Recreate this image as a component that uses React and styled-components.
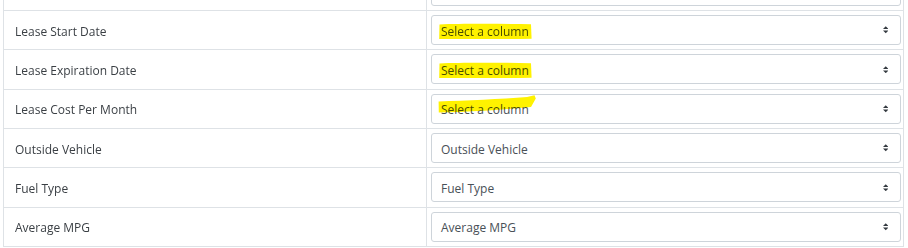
import React from 'react';
import styled, { createGlobalStyle } from 'styled-components';

const rows = [
  { label: '', value: '' },
  { label: 'Lease Start Date', value: 'Select a column', mark: 'flat' },
  { label: 'Lease Expiration Date', value: 'Select a column', mark: 'flat' },
  { label: 'Lease Cost Per Month', value: 'Select a column', mark: 'slant' },
  { label: 'Outside Vehicle', value: 'Outside Vehicle' },
  { label: 'Fuel Type', value: 'Fuel Type' },
  { label: 'Average MPG', value: 'Average MPG' },
];

// highlighter strokes someone drew over the screenshot
const marks = {
  flat: 'M8.5 9.4 C30 8.6 70 8.8 100 9.2 L100.6 23.8 C70 24.3 30 24.1 8.2 23.9 Z',
  slant: 'M7.6 7.4 C35 6.6 70 5 96 3 L103.5 1.2 L104.8 4.4 L100 13 C70 16 35 18 7.8 18.6 Z',
};

const App = () => {
  return (
    <>
      <GlobalStyle />
      <Page>
        <Table>
          {rows.map((row, i) => (
            <Row key={i}>
              <LabelCell>{row.label}</LabelCell>
              <InputCell>
                <SelectBox>
                  <SelectText>{row.value}</SelectText>
                  <Caret viewBox="0 0 4 5">
                    <path d="M2 0L0 2h4zm0 5L0 3h4z" fill="#343a40" />
                  </Caret>
                  {row.mark && (
                    <Marker viewBox="0 0 110 30" width="110" height="30">
                      <path d={marks[row.mark]} fill="#fff200" />
                    </Marker>
                  )}
                </SelectBox>
              </InputCell>
            </Row>
          ))}
        </Table>
      </Page>
    </>
  );
};

const GlobalStyle = createGlobalStyle`
  html, body {
    margin: 0;
    padding: 0;
    background: #ffffff;
  }
  body {
    font-family: "Open Sans", "Noto Sans", "Liberation Sans", sans-serif;
    overflow: hidden;
  }
`;

const Page = styled.div`
  width: 908px;
  height: 248px;
  overflow: hidden;
  background: #ffffff;
`;

const Table = styled.div`
  margin: -29.33px 0 0 3px;
  width: 901px;
  border-left: 1px solid #dee2e6;
  border-right: 1px solid #dee2e6;
  border-bottom: 1px solid #dee2e6;
  box-sizing: border-box;
`;

const Row = styled.div`
  display: grid;
  grid-template-columns: 423px 1fr;
  height: 39.33px;
  border-top: 1px solid #dee2e6;
  box-sizing: border-box;
`;

const LabelCell = styled.div`
  display: flex;
  align-items: center;
  padding: 2px 0 0 11px;
  border-right: 1px solid #dee2e6;
  box-sizing: border-box;
  font-size: 12px;
  color: #3a3f44;
  white-space: nowrap;
`;

const InputCell = styled.div`
  display: flex;
  align-items: center;
  padding: 0 2px 0 4px;
`;

const SelectBox = styled.div`
  position: relative;
  display: flex;
  align-items: center;
  width: 100%;
  height: 30px;
  padding: 2px 12px 0 9px;
  box-sizing: border-box;
  border: 1px solid #ced4da;
  border-radius: 3px;
  background: #ffffff;
  font-size: 12px;
  color: #495057;
`;

const SelectText = styled.span`
  flex: 1;
  white-space: nowrap;
`;

const Caret = styled.svg`
  display: block;
  flex: none;
  width: 5.5px;
  height: 7.5px;
  margin-bottom: 2px;
`;

const Marker = styled.svg`
  position: absolute;
  left: -1px;
  top: -1px;
  mix-blend-mode: multiply;
  pointer-events: none;
`;

export default App;
